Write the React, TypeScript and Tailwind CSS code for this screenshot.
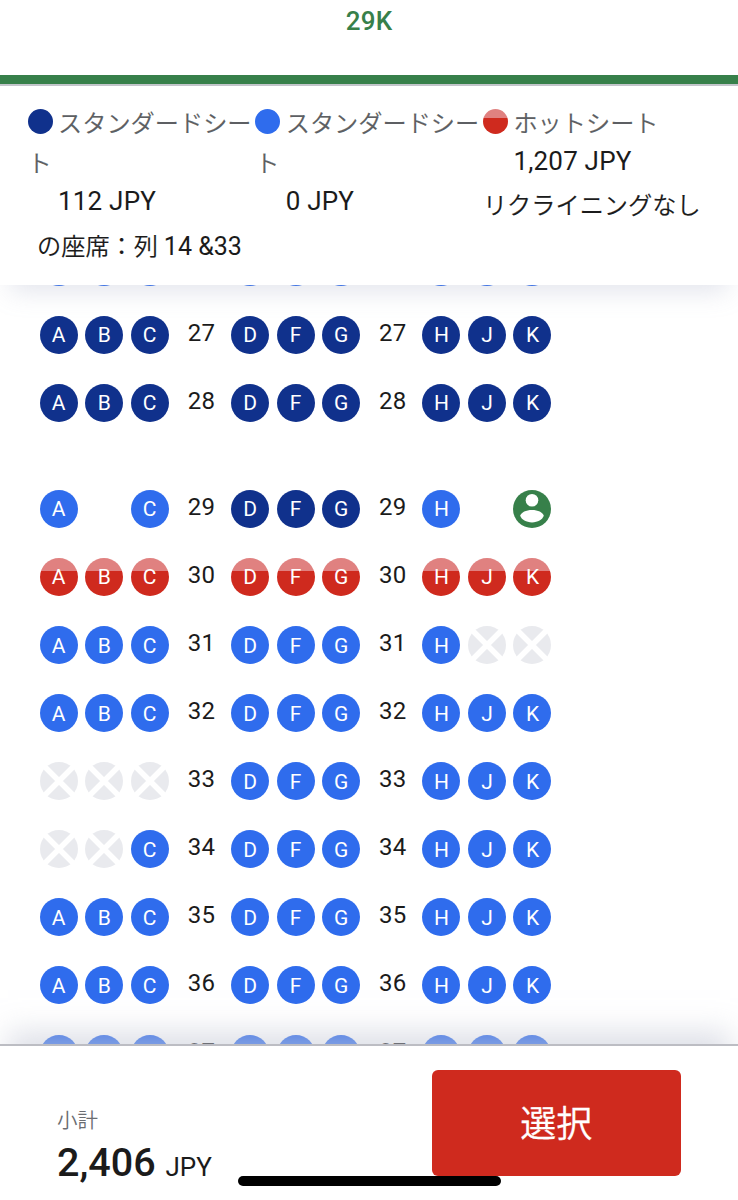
import clsx from "clsx";
import React from "react";

type SeatKind = "dark" | "blue" | "hot" | "taken" | "mine" | "none";

const KINDS: Record<string, SeatKind> = {
  d: "dark",
  b: "blue",
  h: "hot",
  x: "taken",
  m: "mine",
  "-": "none",
};

const LETTERS = [
  ["A", "B", "C"],
  ["D", "F", "G"],
  ["H", "J", "K"],
];

// one character per seat, see KINDS
const rows = [
  { number: 27, seats: ["ddd", "ddd", "ddd"] },
  { number: 28, seats: ["ddd", "ddd", "ddd"], exitAfter: true },
  { number: 29, seats: ["b-b", "ddd", "b-m"] },
  { number: 30, seats: ["hhh", "hhh", "hhh"] },
  { number: 31, seats: ["bbb", "bbb", "bxx"] },
  { number: 32, seats: ["bbb", "bbb", "bbb"] },
  { number: 33, seats: ["xxx", "bbb", "bbb"] },
  { number: 34, seats: ["xxb", "bbb", "bbb"] },
  { number: 35, seats: ["bbb", "bbb", "bbb"] },
  { number: 36, seats: ["bbb", "bbb", "bbb"] },
  { number: 37, seats: ["bbb", "bbb", "bbb"] },
];

const fills: Record<SeatKind, string> = {
  dark: "bg-[#10318c]",
  blue: "bg-[#2f6ced]",
  hot: "bg-linear-to-b from-[#e08180] from-34% to-[#cf2a1e] to-34%",
  taken: "bg-[#e9eaee]",
  mine: "bg-[#37804a]",
  none: "",
};

function Seat({ kind, letter }: { kind: SeatKind; letter?: string }) {
  if (kind === "taken") {
    return (
      <svg viewBox="0 0 38 38" className="size-[38px] shrink-0">
        <circle cx="19" cy="19" r="19" fill="#e9eaee" />
        <path d="M4 4L34 34M34 4L4 34" stroke="#fff" strokeWidth="5.5" />
      </svg>
    );
  }
  if (kind === "mine") {
    return (
      <svg viewBox="0 0 38 38" className="size-[38px] shrink-0">
        <circle cx="19" cy="19" r="19" fill="#37804a" />
        <circle cx="19" cy="10.3" r="6.3" fill="#fff" />
        <path
          d="M7.2 25.8C8.2 22.4 13 20 19 20s10.8 2.4 11.8 5.8C29.5 29.6 24.8 32.4 19 32.4S8.5 29.6 7.2 25.8z"
          fill="#fff"
        />
      </svg>
    );
  }
  return (
    <div
      className={clsx(
        "flex size-[38px] shrink-0 items-center justify-center rounded-full pt-[2px] text-[21px] leading-none text-white",
        fills[kind]
      )}
    >
      {kind !== "none" && letter}
    </div>
  );
}

function SeatRow({ number, seats }: { number: number; seats: string[] }) {
  return (
    <div className="flex h-[68.1px] items-center">
      {seats.map((group, i) => (
        <React.Fragment key={i}>
          {i > 0 && (
            <span className="w-[62.4px] pb-[4px] pl-[3px] text-center text-[24px] leading-none tracking-[0.2px] text-[#1b1b1b]">
              {number}
            </span>
          )}
          <div className="flex gap-[7.5px]">
            {group.split("").map((code, j) => (
              <Seat key={j} kind={KINDS[code]} letter={LETTERS[i][j]} />
            ))}
          </div>
        </React.Fragment>
      ))}
    </div>
  );
}

function LegendItem({
  kind,
  label,
  price,
}: {
  kind: SeatKind;
  label: string;
  price: string;
}) {
  return (
    <div className="w-[227.7px]">
      <p className="text-[24.2px] leading-[40px] font-[350] whitespace-pre text-[#5d5f63] [-webkit-text-stroke:0.15px_#5d5f63]">
        <span
          className={clsx(
            "mr-[5.5px] inline-block size-[25px] rounded-full align-[-2px]",
            fills[kind]
          )}
        />
        {label}
      </p>
      <p className="pl-[30.5px] text-[26px] leading-[34px] tracking-[0.2px] text-[#1b1b1b]">
        {price}
      </p>
    </div>
  );
}

export default function App() {
  return (
    <div className="flex h-[1200px] w-[738px] flex-col overflow-hidden bg-white font-[Roboto,'Noto_Sans_CJK_JP',sans-serif]">
      <div className="flex h-[75px] shrink-0 justify-center pt-[5px] text-[26px] leading-[32px] font-medium tracking-[0.2px] text-[#37804a]">
        29K
      </div>
      <div className="h-[11px] shrink-0 border-b-2 border-[#c3c5cb] bg-[#37804a]" />

      <div className="relative z-10 h-[199px] shrink-0 bg-white pt-[18px] shadow-[0_16px_24px_-10px_rgba(150,158,185,0.28)]">
        <div className="flex h-[120px] pl-[27.5px]">
          <LegendItem
            kind="dark"
            label={"スタンダードシー\nト"}
            price="112 JPY"
          />
          <LegendItem kind="blue" label={"スタンダードシー\nト"} price="0 JPY" />
          <div>
            <LegendItem kind="hot" label="ホットシート" price="1,207 JPY" />
            <p className="pt-[8px] text-[24.2px] leading-[40px] font-[350] text-[#1b1b1b] [-webkit-text-stroke:0.15px_#1b1b1b]">
              リクライニングなし
            </p>
          </div>
        </div>
        <p className="pt-[3px] pl-[37px] text-[24.2px] leading-[40px] font-[350] text-[#1b1b1b] [-webkit-text-stroke:0.15px_#1b1b1b]">
          の座席：列{" "}
          <span className="text-[25px] font-normal [-webkit-text-stroke:0]">
            14 &amp;33
          </span>
        </p>
      </div>

      <div className="h-[759px] shrink-0 overflow-hidden pl-[39.7px]">
        {/* bottom edge of the row scrolled under the legend */}
        <div className="flex h-[15.6px] items-start gap-[62.4px]">
          {LETTERS.map((group) => (
            <div
              key={group[0]}
              className="flex h-[1px] items-end gap-[7.5px] overflow-hidden"
            >
              {group.map((letter) => (
                <Seat key={letter} kind="blue" />
              ))}
            </div>
          ))}
        </div>
        {rows.map((row) => (
          <div key={row.number} className={row.exitAfter ? "mb-[38px]" : ""}>
            <SeatRow number={row.number} seats={row.seats} />
          </div>
        ))}
      </div>

      <div className="relative z-10 flex h-[156px] shrink-0 border-t-2 border-[#bcbdc3] bg-white shadow-[0_-20px_28px_-8px_rgba(200,203,217,0.62)]">
        <div className="w-[431.5px] pt-[57px] pl-[57px]">
          <p className="text-[20.5px] leading-[36px] font-[350] text-[#6b6d72]">
            小計
          </p>
          <p className="text-[39.5px] leading-[48px] font-medium text-[#1b1b1b]">
            2,406 <span className="text-[26px] font-normal">JPY</span>
          </p>
        </div>
        <button className="mt-[24px] h-[106px] w-[249.5px] rounded-md bg-[#cf2a1e] pt-[3px] text-[36px] font-[350] text-white [-webkit-text-stroke:0.3px_#fff]">
          選択
        </button>
        <div className="absolute top-[130px] left-[238px] h-[10px] w-[263px] rounded-full bg-black" />
      </div>
    </div>
  );
}
